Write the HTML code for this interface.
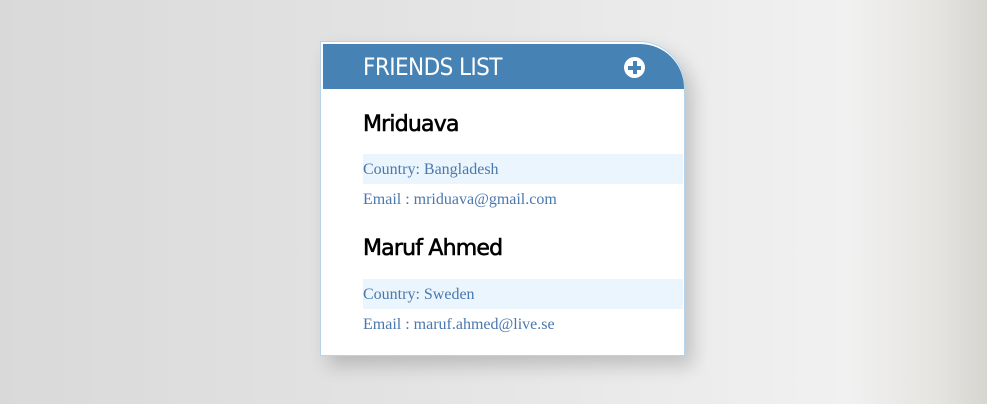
<!DOCTYPE html>
<html><head><style>
html,body{margin:0;width:987px;height:404px;overflow:hidden}
body{background:linear-gradient(90deg,#d9d9d9 0%,#e3e3e3 40%,#ececec 70%,#f1f1f1 86%,#e5e4e0 95%,#d6d5d0 100%);position:relative;font-family:"Liberation Serif",serif}
.card{position:absolute;left:320px;top:41px;width:363px;height:313px;background:#fff;border:1px solid #b5d3ea;border-top-right-radius:46px;box-shadow:8px 10px 18px rgba(0,0,0,0.18)}
.hd{position:absolute;left:2px;top:2px;width:361px;height:45px;background:#4682b4;border-top-right-radius:44px;color:#fff;font-family:"DejaVu Sans Condensed","Liberation Sans Narrow","Liberation Sans",sans-serif;font-size:24px;line-height:47px}
.hd span{position:absolute;left:40px;top:0;letter-spacing:-0.6px}
.plus{position:absolute;left:301px;top:13px;width:21px;height:21px;border-radius:50%;background:#fff}
.plus:before{content:"";position:absolute;left:4px;top:8.5px;width:13px;height:4px;background:#4682b4}
.plus:after{content:"";position:absolute;left:8.5px;top:4px;width:4px;height:13px;background:#4682b4}
.n{position:absolute;left:42px;font-size:22px;color:#000;font-family:"DejaVu Sans","Liberation Sans",sans-serif;letter-spacing:-0.8px;-webkit-text-stroke:0.6px #000}
.r{position:absolute;left:42px;width:320px;height:30px;line-height:31px;font-size:16px;color:#4a78ae}
.b{background:#eaf5fd}
</style></head><body>
<div class="card">
<div class="hd"><span>FRIENDS LIST</span><div class="plus"></div></div>
<div class="n" style="top:70px">Mriduava</div>
<div class="r b" style="top:112px">Country: Bangladesh</div>
<div class="r" style="top:142px">Email : mriduava@gmail.com</div>
<div class="n" style="top:194px">Maruf Ahmed</div>
<div class="r b" style="top:237px">Country: Sweden</div>
<div class="r" style="top:267px">Email : maruf.ahmed@live.se</div>
</div>
</body></html>
